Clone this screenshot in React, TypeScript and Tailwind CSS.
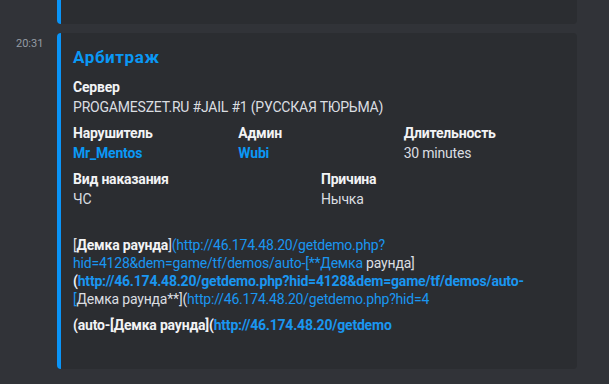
import type React from "react"

const LINK = "text-[#1a96f0]"

function Field({ name, children, className }: { name: string; children: React.ReactNode; className?: string }) {
    return (
        <div className={className}>
            <div className="h-[18px] text-[14px] leading-[18px] font-bold text-[#f2f3f5] mb-[2px]">{name}</div>
            <div className="text-[14px] leading-[18px] text-[#dbdee1] whitespace-nowrap">{children}</div>
        </div>
    )
}

export default function App() {
    return (
        <div className="w-[609px] h-[384px] overflow-hidden bg-[#313338] font-['Roboto',sans-serif] tracking-[-0.2px]">
            {/* previous embed, cut by the top of the window */}
            <div className="ml-[57px] w-[520px] h-[24px] bg-[#2b2d31] rounded-b-[4px] border-l-4 border-[#0a94f7]" />

            <div className="mt-[9px] flex">
                <div className="w-[57px] shrink-0 pl-[16px] pt-[4px] text-[11px] leading-[14px] tracking-normal text-[#949ba4]">20:31</div>

                <div className="w-[520px] h-[336px] bg-[#2b2d31] rounded-[4px] border-l-4 border-[#0a94f7] pl-[12px] pr-[16px] pt-[13px]">
                    <div className="text-[17px] leading-[22px] font-bold tracking-[0.6px] text-[#0a98f5]">Арбитраж</div>

                    <div className="mt-[10px] grid grid-cols-6 gap-x-[8px] gap-y-[8px]">
                        <Field name="Сервер" className="col-span-6">PROGAMESZET.RU #JAIL #1 (РУССКАЯ ТЮРЬМА)</Field>

                        <Field name="Нарушитель" className="col-span-2">
                            <span className="font-bold text-[#0a98f5]">Mr_Mentos</span>
                        </Field>
                        <Field name="Админ" className="col-span-2">
                            <span className="font-bold text-[#0a98f5]">Wubi</span>
                        </Field>
                        <Field name="Длительность" className="col-span-2">30 minutes</Field>

                        <Field name="Вид наказания" className="col-span-3">ЧС</Field>
                        <Field name="Причина" className="col-span-3">Нычка</Field>

                        <Field name="" className="col-span-6">
                            <div>
                                [<span className="font-bold text-[#f2f3f5]">Демка раунда</span>]
                                <span className={LINK}>(http://46.174.48.20/getdemo.php?</span>
                            </div>
                            <div>
                                <span className={LINK}>hid=4128&amp;dem=game/tf/demos/auto-[**Демка</span> раунда]
                            </div>
                            <div className="font-bold text-[#f2f3f5]">
                                (<span className={LINK}>http://46.174.48.20/getdemo.php?hid=4128&amp;dem=game/tf/demos/auto-</span>
                            </div>
                            <div>
                                <span className={LINK}>[</span>Демка раунда**](
                                <span className={LINK}>http://46.174.48.20/getdemo.php?hid=4</span>
                            </div>
                            <div className="mt-[8px] font-bold text-[#f2f3f5]">
                                (auto-[Демка раунда](<span className={LINK}>http://46.174.48.20/getdemo</span>
                            </div>
                        </Field>
                    </div>
                </div>
            </div>
        </div>
    )
}
